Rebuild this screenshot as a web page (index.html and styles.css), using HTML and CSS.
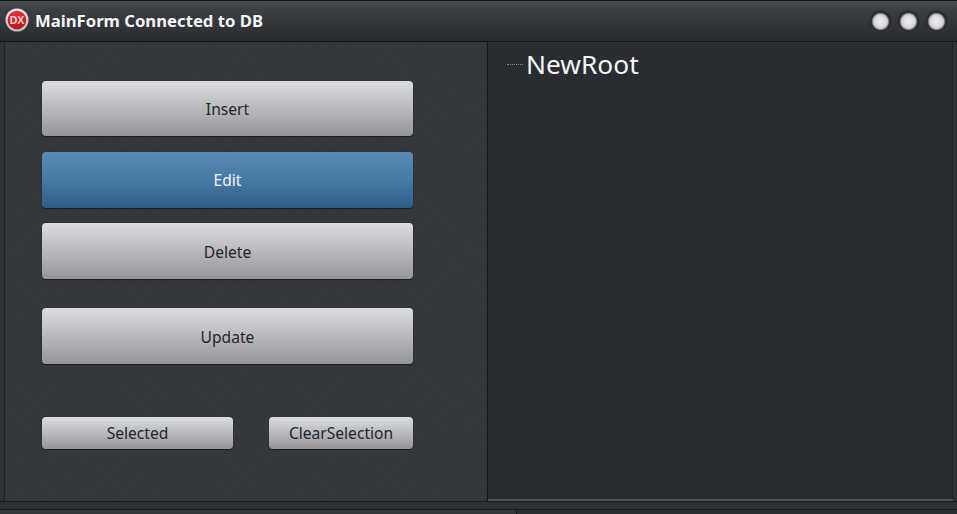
FILE: index.html
```html
<!DOCTYPE html>
<html lang="en">
<head>
<meta charset="utf-8">
<title>MainForm Connected to DB</title>
<link rel="stylesheet" href="styles.css">
</head>
<body>
<div class="window">
  <header class="titlebar">
    <svg class="logo" width="26" height="26" viewBox="0 0 26 26" aria-hidden="true">
      <defs>
        <linearGradient id="ring" x1="0" y1="0" x2="0" y2="1">
          <stop offset="0" stop-color="#e8e8e8"/>
          <stop offset="1" stop-color="#b9b9b9"/>
        </linearGradient>
        <linearGradient id="red" x1="0" y1="0" x2="0" y2="1">
          <stop offset="0" stop-color="#e4303a"/>
          <stop offset="1" stop-color="#bc1522"/>
        </linearGradient>
      </defs>
      <circle cx="13" cy="13" r="11.5" fill="url(#ring)"/>
      <circle cx="13" cy="13" r="9.3" fill="url(#red)"/>
      <text x="13" y="16.5" class="logo-text" text-anchor="middle">DX</text>
    </svg>
    <span class="title">MainForm Connected to DB</span>
    <div class="controls">
      <span class="dot"></span><span class="dot"></span><span class="dot"></span>
    </div>
  </header>
  <main class="body">
    <section class="left">
      <button class="btn btn-large">Insert</button>
      <button class="btn btn-large btn-active">Edit</button>
      <button class="btn btn-large">Delete</button>
      <button class="btn btn-large btn-update">Update</button>
      <div class="small-row">
        <button class="btn btn-small btn-selected">Selected</button>
        <button class="btn btn-small btn-clear">ClearSelection</button>
      </div>
    </section>
    <section class="right">
      <div class="tree-node"><span class="tree-line"></span><span class="tree-label">NewRoot</span></div>
    </section>
  </main>
  <footer class="status">
    <div class="status-bar"></div>
    <div class="status-tail">
      <div class="tail-a"></div>
      <div class="tail-b"></div>
    </div>
  </footer>
</div>
</body>
</html>
```
FILE: styles.css
```css
* { box-sizing: border-box; }
html, body { margin: 0; padding: 0; background: #2b2e32; }
.window {
  width: 957px;
  height: 514px;
  display: flex;
  flex-direction: column;
  overflow: hidden;
  background: #2c2f33;
  font-family: "Noto Sans", "Open Sans", sans-serif;
}
.titlebar {
  height: 42px;
  flex: none;
  display: flex;
  align-items: center;
  padding: 0 9px 0 4px;
  border-top: 1px solid #17181a;
  border-bottom: 1px solid #141517;
  background: linear-gradient(#46494e 0, #3a3d42 10px, #292b2f 100%);
}
.logo { flex: none; margin: -2px 5px 0 0; }
.logo-text {
  font-family: "Liberation Sans", sans-serif;
  font-size: 10.5px;
  font-weight: 700;
  fill: #f6d5d5;
}
.title {
  color: #f4f6f8;
  font-size: 16.7px;
  font-weight: 700;
  line-height: 20px;
}
.controls { margin-left: auto; display: flex; gap: 5px; }
.dot {
  width: 23px;
  height: 23px;
  border-radius: 50%;
  background: radial-gradient(circle at 50% 50%, #eeeeee 0, #dcdddf 5.5px, #bbbcbf 7.4px, #3b3d41 8.8px, #26282b 10px, #34373b 11.5px);
}
.body {
  height: 459px;
  flex: none;
  display: flex;
  padding: 0 4px 0 4px;
  background: #2f3236;
}
.left {
  width: 484px;
  flex: none;
  padding: 39px 0 0 38px;
  display: flex;
  flex-direction: column;
  align-items: flex-start;
  border-right: 1px solid #17181a;
  background-color: #35383d;
  background-image:
    repeating-linear-gradient(45deg, rgba(0,0,0,.03) 0 1px, transparent 1px 3px),
    repeating-linear-gradient(-45deg, rgba(0,0,0,.03) 0 1px, transparent 1px 3px);
  box-shadow: inset 1px 0 0 #1e2023;
}
.right {
  flex: 1;
  padding: 4px 0 0 19px;
  background: #292c30;
  border-bottom: 2px solid #4e5155;
  box-shadow: inset -1px 0 0 #1d1f22;
}
.btn {
  display: block;
  padding: 1px 0 0;
  border: 0;
  border-radius: 4px;
  color: #23252f;
  font-family: inherit;
  font-size: 15.6px;
  text-align: center;
  background: linear-gradient(#dcdde0 0, #b5b6b9 55%, #949598 100%);
  box-shadow: 0 1px 1px #1b1c1e, 0 0 1px rgba(0,0,0,.5);
}
.btn-large { width: 371px; height: 55px; margin-bottom: 16px; }
.btn-active {
  height: 56px;
  margin-bottom: 15px;
  padding: 0;
  color: #f2f5f8;
  background: linear-gradient(#5a8ab5 0, #477aa6 50%, #2e5c85 100%);
}
.btn-large:nth-child(3) { height: 56px; margin-bottom: 29px; }
.btn-update { height: 56px; margin-bottom: 53px; padding-top: 2px; }
.small-row { width: 371px; display: flex; justify-content: space-between; }
.btn-small { height: 32px; padding: 0; }
.btn-selected { width: 191px; }
.btn-clear { width: 144px; }
.tree-node { display: flex; align-items: center; height: 36px; }
.tree-line {
  width: 16px;
  height: 0;
  margin-right: 3px;
  border-top: 1px dotted #8a8d90;
}
.tree-label { color: #f5f7f9; font-size: 26.3px; line-height: 36px; }
.status { flex: 1; display: flex; flex-direction: column; }
.status-bar {
  height: 9px;
  border-top: 1px solid #191a1c;
  border-bottom: 1px solid #191a1c;
  background: #2e3135;
}
.status-tail { flex: 1; display: flex; background: #2b2e32; }
.tail-a { width: 517px; background: #33363b; border-right: 1px solid #17181a; }
.tail-b { flex: 1; }
```
